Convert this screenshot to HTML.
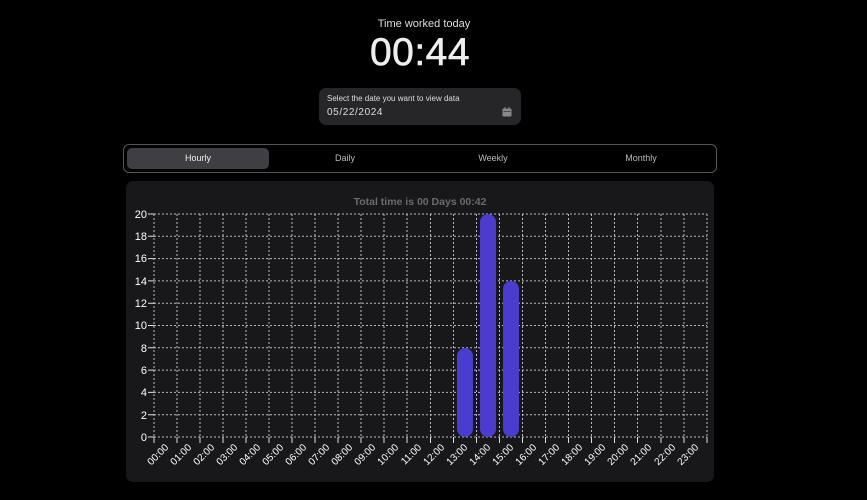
<!DOCTYPE html>
<html><head><meta charset="utf-8"><style>
html,body{margin:0;padding:0;background:#000;width:867px;height:500px;overflow:hidden;font-family:"Liberation Sans",sans-serif;color:#fff}
.t1{position:absolute;top:18px;left:0;width:848px;text-align:center;font-size:11px;color:#ddd}
.t2{position:absolute;top:31px;left:0;width:840px;text-align:center;font-size:39px;color:#eee;letter-spacing:0.5px;-webkit-text-stroke:0.6px #eee}
.date{position:absolute;left:319px;top:88px;width:202px;height:37px;background:#262628;border-radius:7px}
.date .l{position:absolute;left:8px;top:6px;font-size:8px;color:#ddd}
.date .v{position:absolute;left:8px;top:19px;font-size:10px;color:#ddd;letter-spacing:0.6px}
.tabs{position:absolute;left:123px;top:144px;width:592px;height:27px;border:1px solid #555;border-radius:6px}
.tab{position:absolute;top:3px;width:142px;height:21px;line-height:21px;text-align:center;font-size:9px;color:#bbb}
.act{background:#3f3f43;border-radius:5px;color:#eee}
.card{position:absolute;left:126px;top:181px;width:588px;height:301px;background:#18181a;border-radius:7px}
</style></head><body>
<div class="t1">Time worked today</div>
<div class="t2">00:44</div>
<div class="date"><div class="l">Select the date you want to view data</div><div class="v">05/22/2024</div>
<svg style="position:absolute;left:183px;top:19px" width="10" height="10" viewBox="0 0 10 10"><rect x="0.5" y="1.5" width="9" height="8" rx="1" fill="#888"/><rect x="2.5" y="0" width="1" height="2" fill="#888"/><rect x="6.5" y="0" width="1" height="2" fill="#888"/><rect x="1.5" y="4" width="7" height="0.6" fill="#262628"/></svg></div>
<div class="tabs">
<div class="tab act" style="left:3px">Hourly</div>
<div class="tab" style="left:150px">Daily</div>
<div class="tab" style="left:298px">Weekly</div>
<div class="tab" style="left:446px">Monthly</div>
</div>
<div class="card"></div>
<svg style="position:absolute;left:0;top:0" width="867" height="500">
<text x="420" y="205" text-anchor="middle" font-size="10.5" font-weight="bold" fill="#6b6b6f" font-family="Liberation Sans">Total time is 00 Days 00:42</text>
<g stroke="#bbb" stroke-width="1" stroke-dasharray="2,2" fill="none">
<path d="M154 437H707M154 414.7H707M154 392.4H707M154 370.1H707M154 347.8H707M154 325.5H707M154 303.2H707M154 280.9H707M154 258.6H707M154 236.3H707M154 214H707"/>
<path d="M154 214V437M177 214V437M200 214V437M223 214V437M246 214V437M269 214V437M292 214V437M315 214V437M338 214V437M361 214V437M384 214V437M407 214V437M430.5 214V437M453.5 214V437M476.5 214V437M499.5 214V437M522.5 214V437M545.5 214V437M568.5 214V437M591.5 214V437M614.5 214V437M637.5 214V437M661 214V437M684 214V437M707 214V437"/>
</g>
<g stroke="#ddd" stroke-width="1">
<path d="M148 437H154M148 414.7H154M148 392.4H154M148 370.1H154M148 347.8H154M148 325.5H154M148 303.2H154M148 280.9H154M148 258.6H154M148 236.3H154M148 214H154"/>
<path d="M154 437V443M177 437V443M200 437V443M223 437V443M246 437V443M269 437V443M292 437V443M315 437V443M338 437V443M361 437V443M384 437V443M407 437V443M430.5 437V443M453.5 437V443M476.5 437V443M499.5 437V443M522.5 437V443M545.5 437V443M568.5 437V443M591.5 437V443M614.5 437V443M637.5 437V443M661 437V443M684 437V443M707 437V443"/>
</g>
<g fill="#fff" font-size="11" font-family="Liberation Sans" text-anchor="end">
<text x="147" y="441">0</text><text x="147" y="419">2</text><text x="147" y="396">4</text><text x="147" y="374">6</text><text x="147" y="352">8</text><text x="147" y="329">10</text><text x="147" y="307">12</text><text x="147" y="285">14</text><text x="147" y="262">16</text><text x="147" y="240">18</text><text x="147" y="218">20</text>
</g>
<g fill="#4a3ccf">
<rect x="457" y="348" width="16" height="89" rx="8"/>
<rect x="480" y="214" width="16" height="223" rx="8"/>
<rect x="503" y="281" width="16" height="156" rx="8"/>
</g>
<g fill="#fff" font-size="10" font-family="Liberation Sans" text-anchor="end">
<text transform="translate(169,448) rotate(-45)">00:00</text>
<text transform="translate(192,448) rotate(-45)">01:00</text>
<text transform="translate(215,448) rotate(-45)">02:00</text>
<text transform="translate(238,448) rotate(-45)">03:00</text>
<text transform="translate(261,448) rotate(-45)">04:00</text>
<text transform="translate(284,448) rotate(-45)">05:00</text>
<text transform="translate(307,448) rotate(-45)">06:00</text>
<text transform="translate(330,448) rotate(-45)">07:00</text>
<text transform="translate(353,448) rotate(-45)">08:00</text>
<text transform="translate(376,448) rotate(-45)">09:00</text>
<text transform="translate(399,448) rotate(-45)">10:00</text>
<text transform="translate(422,448) rotate(-45)">11:00</text>
<text transform="translate(445,448) rotate(-45)">12:00</text>
<text transform="translate(468,448) rotate(-45)">13:00</text>
<text transform="translate(491,448) rotate(-45)">14:00</text>
<text transform="translate(514,448) rotate(-45)">15:00</text>
<text transform="translate(537,448) rotate(-45)">16:00</text>
<text transform="translate(560,448) rotate(-45)">17:00</text>
<text transform="translate(583,448) rotate(-45)">18:00</text>
<text transform="translate(606,448) rotate(-45)">19:00</text>
<text transform="translate(629,448) rotate(-45)">20:00</text>
<text transform="translate(652,448) rotate(-45)">21:00</text>
<text transform="translate(676,448) rotate(-45)">22:00</text>
<text transform="translate(699,448) rotate(-45)">23:00</text>
</g>
</svg>
</body></html>
